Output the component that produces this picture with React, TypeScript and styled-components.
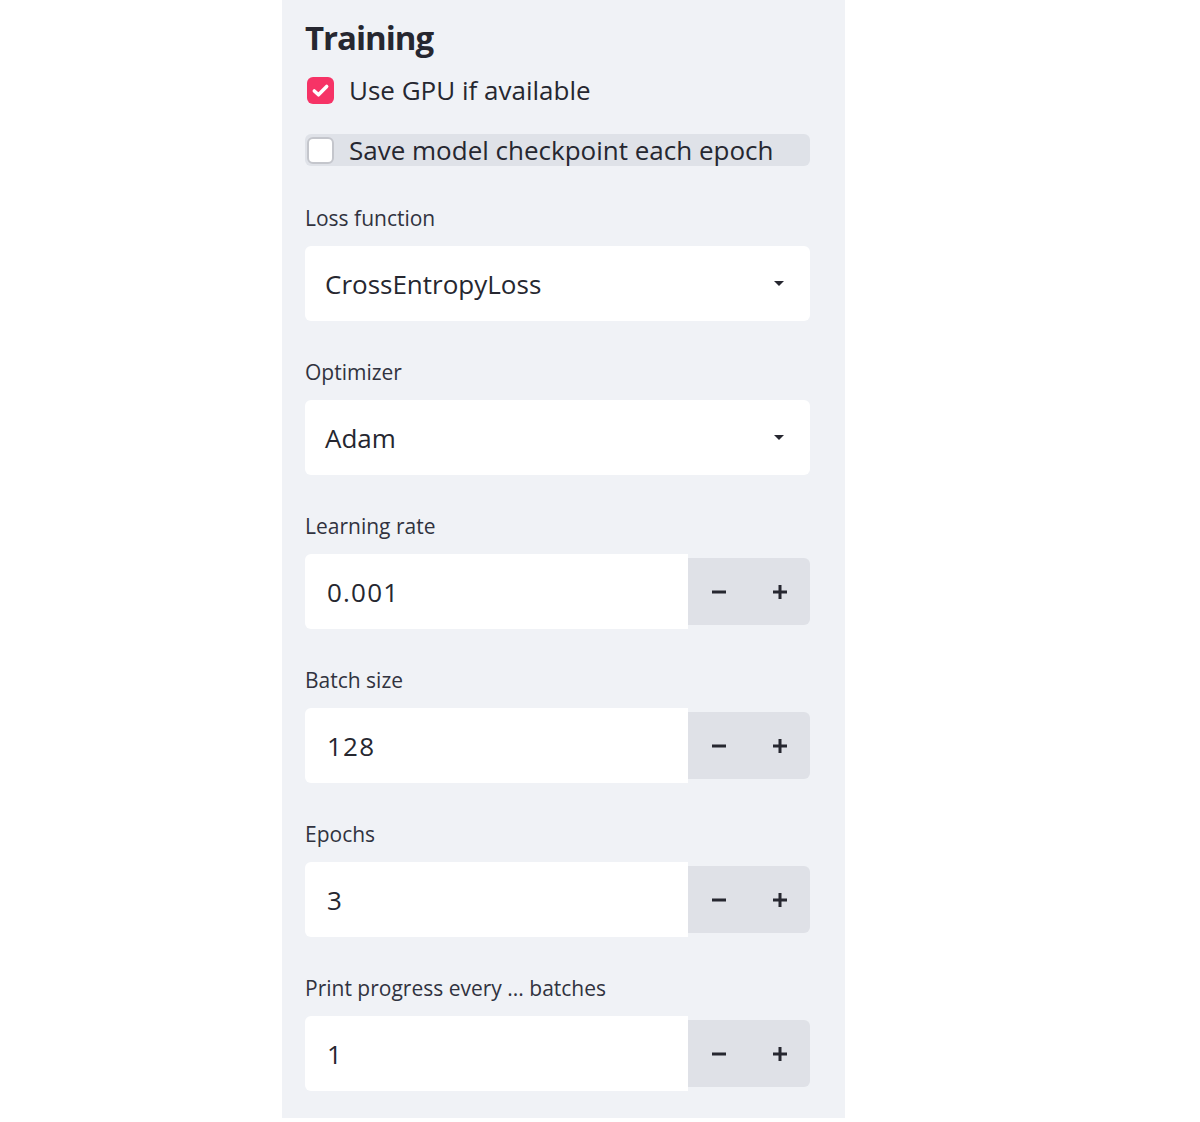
import { createGlobalStyle } from 'styled-components';
import styled from 'styled-components';

const GlobalStyle = createGlobalStyle`
  body {
    margin: 0;
    background: #ffffff;
    font-family: 'Open Sans', 'Noto Sans', sans-serif;
    color: #262730;
  }
`;

const Page = styled.div`
  display: flex;
  padding-left: 282px;
`;

const Sidebar = styled.aside`
  width: 563px;
  height: 1118px;
  box-sizing: border-box;
  background: #f0f2f6;
  padding: 15px 35px 0 23px;
  display: flex;
  flex-direction: column;
`;

const Title = styled.h2`
  margin: 0 0 13px;
  font-size: 33px;
  line-height: 46px;
  font-weight: 700;
  letter-spacing: -1px;
  color: #262730;
`;

const CheckRow = styled.label<{ $hover?: boolean }>`
  display: flex;
  align-items: center;
  gap: 15px;
  height: 32px;
  padding-left: 2px;
  border-radius: 6px;
  margin-bottom: 27px;
  background: ${p => (p.$hover ? '#dfe2e8' : 'transparent')};
  font-size: 26px;
  color: #262730;
  &:first-of-type {
    margin-bottom: 28px;
  }
`;

const Box = styled.span<{ $checked?: boolean }>`
  width: 27px;
  height: 27px;
  box-sizing: border-box;
  border-radius: 6px;
  display: flex;
  align-items: center;
  justify-content: center;
  background: ${p => (p.$checked ? '#f63366' : '#ffffff')};
  border: ${p => (p.$checked ? 'none' : '2px solid #c4c6cc')};
`;

const Field = styled.div`
  display: flex;
  flex-direction: column;
  margin-bottom: 37px;
`;

const FieldsStart = styled.div`
  margin-top: 11px;
`;

const Label = styled.div`
  font-size: 21px;
  line-height: 28px;
  color: #31333f;
  margin-bottom: 14px;
`;

const Select = styled.div`
  height: 75px;
  background: #ffffff;
  border-radius: 6px;
  display: flex;
  align-items: center;
  justify-content: space-between;
  padding: 0 26px 0 20px;
  font-size: 26px;
  color: #262730;
`;

const Caret = styled.span`
  width: 0;
  height: 0;
  border-left: 5px solid transparent;
  border-right: 5px solid transparent;
  border-top: 5px solid #262730;
`;

const NumberBox = styled.div`
  display: flex;
  align-items: center;
  height: 75px;
`;

const NumberValue = styled.div`
  width: 383px;
  height: 75px;
  box-sizing: border-box;
  background: #ffffff;
  border-radius: 6px 0 0 6px;
  display: flex;
  align-items: center;
  padding-left: 22px;
  font-size: 26px;
  letter-spacing: 1.2px;
  color: #262730;
`;

const Steppers = styled.div`
  flex: 1;
  height: 67px;
  display: flex;
  background: #dfe1e7;
  border-radius: 0 6px 6px 0;
`;

const StepButton = styled.button`
  flex: 1;
  border: 0;
  background: transparent;
  display: flex;
  align-items: center;
  justify-content: center;
  padding: 0;
  color: #262730;
`;

const Minus = () => (
  <svg width="14" height="14" viewBox="0 0 14 14">
    <rect x="0" y="5.5" width="14" height="3" fill="currentColor" />
  </svg>
);

const Plus = () => (
  <svg width="14" height="14" viewBox="0 0 14 14">
    <rect x="0" y="5.5" width="14" height="3" fill="currentColor" />
    <rect x="5.5" y="0" width="3" height="14" fill="currentColor" />
  </svg>
);

const Check = () => (
  <svg width="19" height="19" viewBox="0 0 16 16">
    <path d="M2.8 8.4 L6.3 11.6 L13.2 4.6" stroke="#fff" strokeWidth="3" fill="none" strokeLinecap="round" strokeLinejoin="round" />
  </svg>
);

const selects = [
  { label: 'Loss function', value: 'CrossEntropyLoss' },
  { label: 'Optimizer', value: 'Adam' },
];

const numbers = [
  { label: 'Learning rate', value: '0.001' },
  { label: 'Batch size', value: '128' },
  { label: 'Epochs', value: '3' },
  { label: 'Print progress every ... batches', value: '1' },
];

export default function App() {
  return (
    <>
      <GlobalStyle />
      <Page>
        <Sidebar>
          <Title>Training</Title>
          <CheckRow>
            <Box $checked>
              <Check />
            </Box>
            Use GPU if available
          </CheckRow>
          <CheckRow $hover>
            <Box />
            Save model checkpoint each epoch
          </CheckRow>
          <FieldsStart>
            {selects.map(s => (
              <Field key={s.label}>
                <Label>{s.label}</Label>
                <Select>
                  {s.value}
                  <Caret />
                </Select>
              </Field>
            ))}
            {numbers.map(n => (
              <Field key={n.label}>
                <Label>{n.label}</Label>
                <NumberBox>
                  <NumberValue>{n.value}</NumberValue>
                  <Steppers>
                    <StepButton aria-label="minus">
                      <Minus />
                    </StepButton>
                    <StepButton aria-label="plus">
                      <Plus />
                    </StepButton>
                  </Steppers>
                </NumberBox>
              </Field>
            ))}
          </FieldsStart>
        </Sidebar>
      </Page>
    </>
  );
}
